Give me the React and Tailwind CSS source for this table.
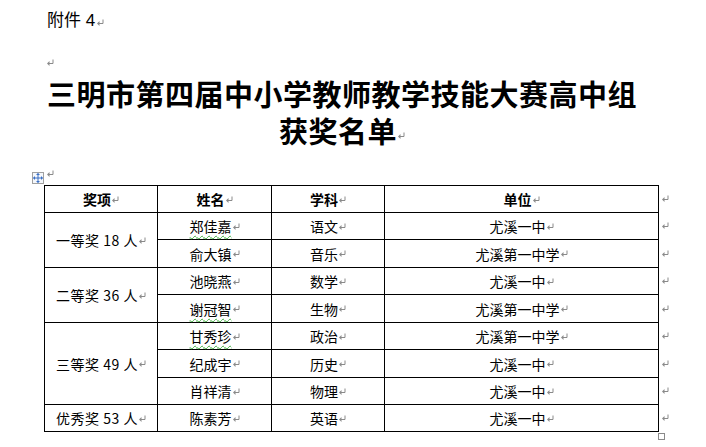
import React from 'react';

const Mark = ({ className = '' }) => (
  <svg width="7" height="7" viewBox="0 0 7 7" className={`inline-block shrink-0 ${className}`}>
    <path d="M6 0.5V4.5H2" stroke="#8a8a8a" fill="none" strokeWidth="1" />
    <path d="M0 4.5L2.5 2V7Z" fill="#8a8a8a" />
  </svg>
);

const groups = [
  {
    label: '一等奖 18 人',
    rows: [
      { name: '郑佳嘉', wavy: true, subject: '语文', unit: '尤溪一中' },
      { name: '俞大镇', subject: '音乐', unit: '尤溪第一中学' },
    ],
  },
  {
    label: '二等奖 36 人',
    rows: [
      { name: '池晓燕', subject: '数学', unit: '尤溪一中' },
      { name: '谢冠智', wavy: true, subject: '生物', unit: '尤溪第一中学' },
    ],
  },
  {
    label: '三等奖 49 人',
    rows: [
      { name: '甘秀珍', wavy: true, subject: '政治', unit: '尤溪第一中学' },
      { name: '纪成宇', subject: '历史', unit: '尤溪一中' },
      { name: '肖祥清', subject: '物理', unit: '尤溪一中' },
    ],
  },
  {
    label: '优秀奖 53 人',
    rows: [{ name: '陈素芳', subject: '英语', unit: '尤溪一中' }],
  },
];

const rowSpan = { 1: 'row-span-1', 2: 'row-span-2', 3: 'row-span-3' };

function Cell({ children, className = '' }) {
  return (
    <div className={`flex items-center justify-center border-r border-b border-black ${className}`}>
      {children}
      <Mark className="ml-[1px]" />
    </div>
  );
}

export default function App() {
  return (
    <div className="w-[706px] h-[447px] overflow-hidden bg-white text-black font-['Noto_Sans_CJK_SC',sans-serif]">
      {/* 附件 */}
      <div className="pt-[10px] pl-[47px]">
        <div className="h-[22px] flex items-center text-[17px] font-['Liberation_Sans','Noto_Sans_CJK_SC',sans-serif]">
          附件 4<Mark className="ml-[2px] mt-[2px]" />
        </div>
        <div className="h-[20px] mt-[20px] flex items-center">
          <Mark />
        </div>
        <div className="mt-[3px] w-[590px] text-center text-[29px] leading-[37px] font-bold tracking-[0.5px]">
          三明市第四届中小学教师教学技能大赛高中组
          <br />
          获奖名单<Mark className="ml-[1px]" />
        </div>
      </div>

      {/* table anchor */}
      <div className="mt-[21px] h-[15px] flex items-start pl-[32px]">
        <div className="mt-[2px] w-[12px] h-[12px] border border-[#a0a0a0] bg-[#f4f7fb] flex items-center justify-center">
          <svg width="10" height="10" viewBox="0 0 10 10">
            <path d="M5 0.5V9.5M0.5 5H9.5" stroke="#3a6fc4" strokeWidth="1" />
            <path d="M5 0L3 2H7Z M5 10L3 8H7Z M0 5L2 3V7Z M10 5L8 3V7Z" fill="#3a6fc4" />
          </svg>
        </div>
        <Mark className="ml-[3px]" />
      </div>

      {/* table */}
      <div className="flex pl-[44px]">
        <div className="relative">
          <div className="grid grid-cols-[113px_114px_113px_274px] grid-rows-[27px_27px_28px_27px_28px_27px_28px_27px_27px] border-t border-l border-black text-[14px] leading-none">
            <Cell className="font-bold">奖项</Cell>
            <Cell className="font-bold">姓名</Cell>
            <Cell className="font-bold">学科</Cell>
            <Cell className="font-bold">单位</Cell>
            {groups.map((g) => (
              <React.Fragment key={g.label}>
                <Cell className={`${rowSpan[g.rows.length]} tracking-[0.5px]`}>{g.label}</Cell>
                {g.rows.map((r) => (
                  <React.Fragment key={r.name}>
                    <Cell>
                      <span className={r.wavy ? 'underline decoration-wavy decoration-[#3fae3f] decoration-1 underline-offset-[3px]' : ''}>
                        {r.name}
                      </span>
                    </Cell>
                    <Cell>{r.subject}</Cell>
                    <Cell>{r.unit}</Cell>
                  </React.Fragment>
                ))}
              </React.Fragment>
            ))}
          </div>
          <div className="absolute right-[-6px] bottom-[-8px] w-[7px] h-[7px] border border-[#8a8a8a] bg-white" />
        </div>
        <div className="mt-[1px] grid grid-rows-[27px_27px_28px_27px_28px_27px_28px_27px_27px]">
          {Array.from({ length: 9 }).map((_, i) => (
            <div key={i} className="flex items-center pl-[3px] pb-[2px]">
              <Mark />
            </div>
          ))}
        </div>
      </div>

      <div className="pl-[124px] mt-[8px]">
        <Mark />
      </div>
    </div>
  );
}
